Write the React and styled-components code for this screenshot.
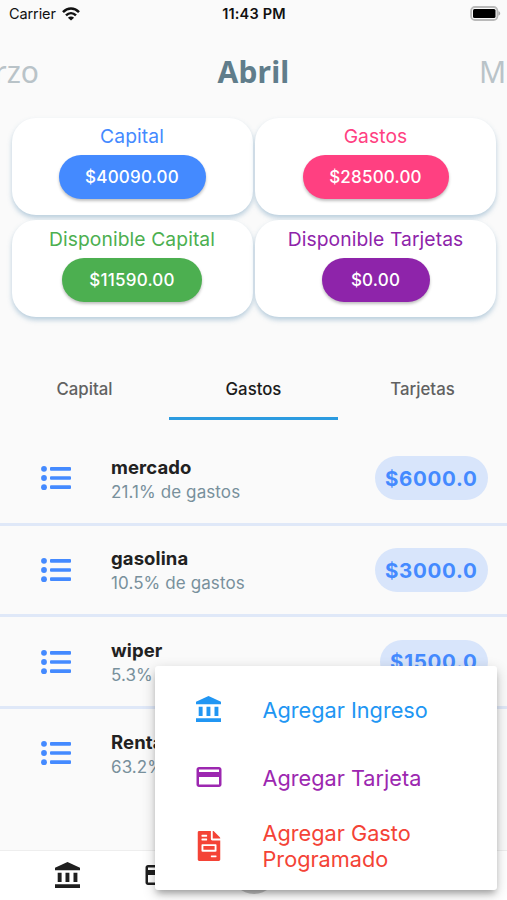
import React from 'react';
import styled, { createGlobalStyle } from 'styled-components';
import { MdOutlineCreditCard } from 'react-icons/md';
import { FaFileInvoice } from 'react-icons/fa';

const GlobalStyle = createGlobalStyle`
  * { box-sizing: border-box; }
  body { margin: 0; background: #fafafa; font-family: Inter, Roboto, sans-serif; }
  h1, p { margin: 0; }
  button { font: inherit; border: 0; background: none; padding: 0; }
`;

const Screen = styled.div`
  position: relative;
  width: 507px;
  height: 900px;
  overflow: hidden;
  display: flex;
  flex-direction: column;
  background: #fafafa;
  color: #212121;
  white-space: nowrap;
`;

const StatusBar = styled.header`
  display: grid;
  grid-template-columns: 1fr auto 1fr;
  align-items: center;
  height: 27px;
  padding: 0 6px 0 9px;
  color: #111;
  svg { display: block; }
`;
const Carrier = styled.div`
  display: flex;
  align-items: center;
  gap: 6px;
  font-size: 14.5px;
  letter-spacing: -0.1px;
`;
const Clock = styled.div`
  margin-right: 2px;
  font-size: 14.5px;
  font-weight: 600;
  letter-spacing: 0.2px;
`;
const BatteryIcon = styled.svg`
  justify-self: end;
`;

const Months = styled.nav`
  display: grid;
  grid-template-columns: 60px 1fr 60px;
  align-items: center;
  height: 90.5px;
  padding-bottom: 1.5px;
  color: #b9c3c8;
  font-family: "Noto Sans", sans-serif;
  font-size: 30px;
  overflow: hidden;
`;
const PreviousMonth = styled.span`
  justify-self: end;
  margin-right: 21px;
`;
const NextMonth = styled.span`
  margin-left: 32px;
`;
const CurrentMonth = styled.h1`
  text-align: center;
  font-size: 30px;
  font-weight: 700;
  letter-spacing: 0.2px;
  color: #607d8b;
`;

const Summary = styled.section`
  display: grid;
  grid-template-columns: 241px 241px;
  grid-auto-rows: 97px;
  gap: 5.5px 2.5px;
  padding: 0 10.5px 0 11.5px;
`;
const SummaryCard = styled.article`
  display: flex;
  flex-direction: column;
  align-items: center;
  padding-top: 6.5px;
  border-radius: 24px;
  background: #fff;
  box-shadow: 0 3px 5px rgba(96, 145, 180, 0.42);
`;
const SummaryLabel = styled.p`
  font-size: 19.3px;
  line-height: 24px;
  letter-spacing: 0.08px;
  color: ${(p) => p.$color};
`;
const Amount = styled.div`
  display: flex;
  align-items: center;
  justify-content: center;
  width: ${(p) => p.$width}px;
  height: 44px;
  margin-top: 7px;
  border-radius: 22px;
  background: ${(p) => p.$color};
  color: #fff;
  font-size: 17px;
  font-weight: 500;
  letter-spacing: 0.2px;
  box-shadow: 0 2px 3px rgba(0, 0, 0, 0.25);
`;

const Tabs = styled.div`
  display: grid;
  grid-template-columns: repeat(3, 169px);
  height: 61px;
  margin-top: 42px;
`;
const Tab = styled.button`
  height: 61px;
  padding-top: 1.5px;
  font-size: 16.8px;
  font-weight: 500;
  color: ${(p) => (p.$active ? '#1c1c1c' : '#616161')};
  border-bottom: 3px solid ${(p) => (p.$active ? '#2b9be0' : 'transparent')};
`;

const ExpenseList = styled.main`
  flex: 1;
  min-height: 0;
  padding-top: 14.2px;
`;
const Expense = styled.article`
  display: flex;
  align-items: center;
  height: 91.6px;
  padding: 0 19.5px 0 41px;
  border-bottom: 3.5px solid ${(p) => (p.$last ? 'transparent' : '#dfe8f8')};
`;
const ExpenseText = styled.div`
  flex: 1;
  margin-left: 40px;
  padding-top: 2.5px;
`;
const ExpenseName = styled.p`
  font-size: 18.5px;
  font-weight: 650;
  line-height: 25px;
  letter-spacing: 0.1px;
`;
const ExpenseShare = styled.p`
  font-size: 17px;
  line-height: 25px;
  letter-spacing: 0.1px;
  color: #78909c;
`;
const ExpenseAmount = styled.div`
  display: flex;
  align-items: center;
  height: 44px;
  padding: 0 10px;
  border-radius: 22px;
  background: #d8e5fb;
  color: #448aff;
  font-size: 20.5px;
  font-weight: 650;
  letter-spacing: 0.7px;
`;

const BottomBar = styled.footer`
  display: flex;
  align-items: center;
  gap: 62.5px;
  height: 50px;
  padding: 0 0 2px 55px;
  border-top: 1px solid #eee;
  background: #fff;
  color: #1f1f1f;
`;
const AddButton = styled.div`
  position: absolute;
  left: 231px;
  bottom: 6px;
  width: 46px;
  height: 46px;
  border-radius: 50%;
  background: #c8c8c8;
`;

const Menu = styled.div`
  position: absolute;
  left: 155px;
  top: 666px;
  width: 342px;
  height: 224px;
  padding-top: 9.5px;
  border-radius: 3px;
  background: #fff;
  box-shadow: 0 5px 6px -2px rgba(0, 0, 0, 0.26), 0 4px 14px rgba(0, 0, 0, 0.2);
`;
const MenuItem = styled.button`
  display: grid;
  grid-template-columns: 107.5px 1fr;
  align-items: center;
  width: 100%;
  height: 68.3px;
  color: ${(p) => p.$color};
  font-size: 21.7px;
  line-height: 26px;
  text-align: left;
  svg { display: block; justify-self: center; margin-bottom: 1px; }
`;

const WifiIcon = () => (
  <svg width="18" height="14" viewBox="0 0 18 14" fill="none" stroke="#111" strokeWidth="2.5">
    <path d="M1 5.2C5.7.4 12.3.4 17 5.2" />
    <path d="M4 8.4c3-2.9 7-2.9 10 0" />
    <path d="M9 13.6 5.9 10.8c1.8-1.6 4.4-1.6 6.2 0z" fill="#111" stroke="none" />
  </svg>
);

const Battery = () => (
  <BatteryIcon width="31" height="15" viewBox="0 0 31 15">
    <rect x="1.1" y="1" width="26.3" height="13" rx="3.8" fill="#fafafa" stroke="#b9b9b9" strokeWidth="1.8" />
    <rect x="3" y="3" width="22.5" height="9" rx="1.5" fill="#000" />
    <path d="M28.4 5.3c2.4.6 2.4 3.8 0 4.4z" fill="#aaa" />
  </BatteryIcon>
);

const BankIcon = () => (
  <svg width="25" height="26" viewBox="0 0 25 26" fill="currentColor">
    <path d="M12.5 0 25 5.7V8.2H0V5.7z" />
    <path d="M2.7 10.7h3.9v9.4H2.7zM10.5 10.7h3.9v9.4h-3.9zM18.5 10.7h3.9v9.4h-3.9zM0 22.2h25v3.7H0z" />
  </svg>
);

const ListIcon = () => (
  <svg width="30" height="26" viewBox="0 0 30 26" fill="#448aff">
    {[3.8, 13, 22.2].map((y) => (
      <g key={y}>
        <circle cx="3" cy={y} r="2.9" />
        <rect x="9" y={y - 1.85} width="21" height="3.7" rx="1" />
      </g>
    ))}
  </svg>
);

const summary = [
  { label: 'Capital', amount: '$40090.00', color: '#448aff', width: 147 },
  { label: 'Gastos', amount: '$28500.00', color: '#ff4081', width: 146 },
  { label: 'Disponible Capital', amount: '$11590.00', color: '#4caf50', width: 140 },
  { label: 'Disponible Tarjetas', amount: '$0.00', color: '#8e24aa', width: 108 },
];

const expenses = [
  { name: 'mercado', share: '21.1% de gastos', amount: '$6000.0' },
  { name: 'gasolina', share: '10.5% de gastos', amount: '$3000.0' },
  { name: 'wiper', share: '5.3% de gastos', amount: '$1500.0' },
  { name: 'Renta', share: '63.2% de gastos', amount: '$18000.0' },
];

export default function App() {
  return (
    <>
      <GlobalStyle />
      <Screen>
        <StatusBar>
          <Carrier>Carrier <WifiIcon /></Carrier>
          <Clock>11:43 PM</Clock>
          <Battery />
        </StatusBar>
        <Months>
          <PreviousMonth>Marzo</PreviousMonth>
          <CurrentMonth>Abril</CurrentMonth>
          <NextMonth>Mayo</NextMonth>
        </Months>
        <Summary>
          {summary.map((s) => (
            <SummaryCard key={s.label}>
              <SummaryLabel $color={s.color}>{s.label}</SummaryLabel>
              <Amount $color={s.color} $width={s.width}>{s.amount}</Amount>
            </SummaryCard>
          ))}
        </Summary>
        <Tabs>
          <Tab>Capital</Tab>
          <Tab $active>Gastos</Tab>
          <Tab>Tarjetas</Tab>
        </Tabs>
        <ExpenseList>
          {expenses.map((e, i) => (
            <Expense key={e.name} $last={i === expenses.length - 1}>
              <ListIcon />
              <ExpenseText>
                <ExpenseName>{e.name}</ExpenseName>
                <ExpenseShare>{e.share}</ExpenseShare>
              </ExpenseText>
              <ExpenseAmount>{e.amount}</ExpenseAmount>
            </Expense>
          ))}
        </ExpenseList>
        <BottomBar>
          <BankIcon />
          <MdOutlineCreditCard size={30} />
        </BottomBar>
        <AddButton />
        <Menu>
          <MenuItem $color="#2196f3"><BankIcon /><span>Agregar Ingreso</span></MenuItem>
          <MenuItem $color="#9c27b0"><MdOutlineCreditCard size={30} /><span>Agregar Tarjeta</span></MenuItem>
          <MenuItem $color="#f44336"><FaFileInvoice size={30} /><span>Agregar Gasto<br />Programado</span></MenuItem>
        </Menu>
      </Screen>
    </>
  );
}
